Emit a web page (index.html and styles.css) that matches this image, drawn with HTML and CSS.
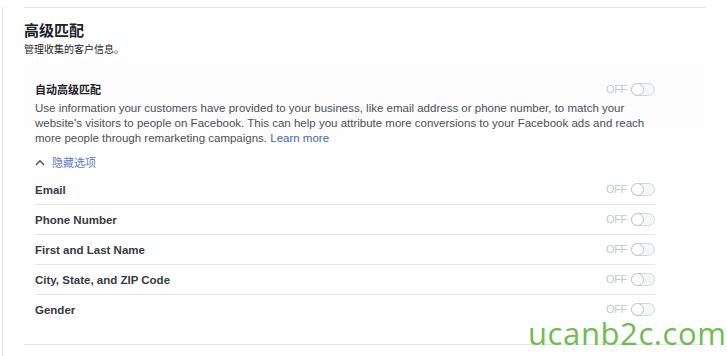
FILE: index.html
```html
<!DOCTYPE html>
<html lang="zh">
<head>
<meta charset="utf-8">
<title>高级匹配</title>
<link rel="stylesheet" href="styles.css">
</head>
<body>
<div class="page">
  <section class="section">
    <h2 class="title">高级匹配</h2>
    <p class="subtitle">管理收集的客户信息。</p>
    <div class="panel">
      <div class="panel-inner">
        <div class="row-head">
          <span class="head-label">自动高级匹配</span>
          <span class="switch"><span class="off">OFF</span><svg class="toggle" width="24" height="13" viewBox="0 0 24 13"><rect x="0.5" y="0.5" width="23" height="12" rx="6" fill="#f5f6f7" stroke="#d3d6db"/><circle cx="6.5" cy="6.5" r="6" fill="#fff" stroke="#bec3c9"/></svg></span>
        </div>
        <p class="desc">Use information your customers have provided to your business, like email address or phone number, to match your website's visitors to people on Facebook. This can help you attribute more conversions to your Facebook ads and reach more people through remarketing campaigns. <a class="link" href="#">Learn more</a></p>
      </div>
    </div>
    <div class="list">
      <a class="hide" href="#"><svg class="chev" width="10" height="7" viewBox="0 0 10 7"><polyline points="1,6 5,1.8 9,6" fill="none" stroke="#4b4f56" stroke-width="1.3"/></svg><span>隐藏选项</span></a>
      <div class="rows">
        <div class="row"><span class="row-label">Email</span><span class="switch"><span class="off">OFF</span><svg class="toggle" width="24" height="13" viewBox="0 0 24 13"><rect x="0.5" y="0.5" width="23" height="12" rx="6" fill="#f5f6f7" stroke="#d3d6db"/><circle cx="6.5" cy="6.5" r="6" fill="#fff" stroke="#bec3c9"/></svg></span></div>
        <div class="row"><span class="row-label">Phone Number</span><span class="switch"><span class="off">OFF</span><svg class="toggle" width="24" height="13" viewBox="0 0 24 13"><rect x="0.5" y="0.5" width="23" height="12" rx="6" fill="#f5f6f7" stroke="#d3d6db"/><circle cx="6.5" cy="6.5" r="6" fill="#fff" stroke="#bec3c9"/></svg></span></div>
        <div class="row"><span class="row-label">First and Last Name</span><span class="switch"><span class="off">OFF</span><svg class="toggle" width="24" height="13" viewBox="0 0 24 13"><rect x="0.5" y="0.5" width="23" height="12" rx="6" fill="#f5f6f7" stroke="#d3d6db"/><circle cx="6.5" cy="6.5" r="6" fill="#fff" stroke="#bec3c9"/></svg></span></div>
        <div class="row"><span class="row-label">City, State, and ZIP Code</span><span class="switch"><span class="off">OFF</span><svg class="toggle" width="24" height="13" viewBox="0 0 24 13"><rect x="0.5" y="0.5" width="23" height="12" rx="6" fill="#f5f6f7" stroke="#d3d6db"/><circle cx="6.5" cy="6.5" r="6" fill="#fff" stroke="#bec3c9"/></svg></span></div>
        <div class="row"><span class="row-label">Gender</span><span class="switch"><span class="off">OFF</span><svg class="toggle" width="24" height="13" viewBox="0 0 24 13"><rect x="0.5" y="0.5" width="23" height="12" rx="6" fill="#f5f6f7" stroke="#d3d6db"/><circle cx="6.5" cy="6.5" r="6" fill="#fff" stroke="#bec3c9"/></svg></span></div>
      </div>
    </div>
  </section>
  <div class="watermark">ucanb2c.com</div>
</div>
</body>
</html>
```

FILE: styles.css
```css
* { box-sizing: border-box; }
html, body { margin: 0; padding: 0; background: #fff; }
body {
  font-family: "Liberation Sans", Arial, "Noto Sans CJK SC", sans-serif;
  color: #1d2129;
  width: 727px;
  height: 356px;
  overflow: hidden;
}
.page {
  position: relative;
  margin-left: 2px;
  height: 356px;
  border-left: 1px solid #e4e6e9;
}
.section {
  margin-left: 21px;
  width: 682px;
  margin-top: 7px;
  border-top: 1px solid #e3e5e8;
  border-bottom: 1px solid #e3e5e8;
  padding: 12px 0 20px;
}
.title {
  margin: 0;
  font-size: 15px;
  line-height: 20px;
  font-weight: bold;
  color: #1d2129;
  font-family: "Noto Sans CJK SC", sans-serif;
}
.subtitle {
  margin: 2px 0 0;
  font-size: 10px;
  line-height: 14px;
  color: #1d2129;
  font-family: "Noto Sans CJK SC", sans-serif;
}
.panel {
  margin-top: 7px;
  padding: 18px 0 0 11px;
  background: linear-gradient(#fdfdfd, #fdfdfd 75%, #fff);
}
.panel-inner { width: 620px; }
.row-head {
  display: flex;
  justify-content: space-between;
  align-items: center;
  height: 16px;
}
.head-label {
  font-size: 11px;
  font-weight: bold;
  font-family: "Noto Sans CJK SC", sans-serif;
  line-height: 16px;
}
.switch {
  display: flex;
  align-items: center;
  gap: 4px;
}
.off {
  font-size: 11px;
  color: #c4c7cc;
  line-height: 13px;
  letter-spacing: -0.3px;
}
.toggle { display: block; }
.desc {
  margin: 4px 0 0;
  font-size: 11.5px;
  line-height: 15px;
  color: #4b4f56;
}
.link { color: #4267b2; text-decoration: none; }
.list { margin-left: 11px; width: 620px; }
.hide {
  display: flex;
  align-items: center;
  gap: 7px;
  margin-top: 8px;
  height: 16px;
  font-size: 11px;
  line-height: 16px;
  color: #5d7bc8;
  text-decoration: none;
  font-family: "Noto Sans CJK SC", sans-serif;
}
.chev { display: block; }
.rows { margin-top: 5px; }
.row {
  display: flex;
  justify-content: space-between;
  align-items: center;
  height: 30px;
  border-top: 1px solid #e5e6e9;
}
.row:first-child { border-top: 0; height: 29px; }
.row-label {
  font-size: 11.5px;
  font-weight: bold;
  color: #353a42;
}
.watermark {
  position: absolute;
  left: 525px;
  top: 311px;
  font-family: "Open Sans", sans-serif;
  font-size: 31px;
  line-height: 1;
  color: #6dbe4f;
  letter-spacing: 0.6px;
}
```
